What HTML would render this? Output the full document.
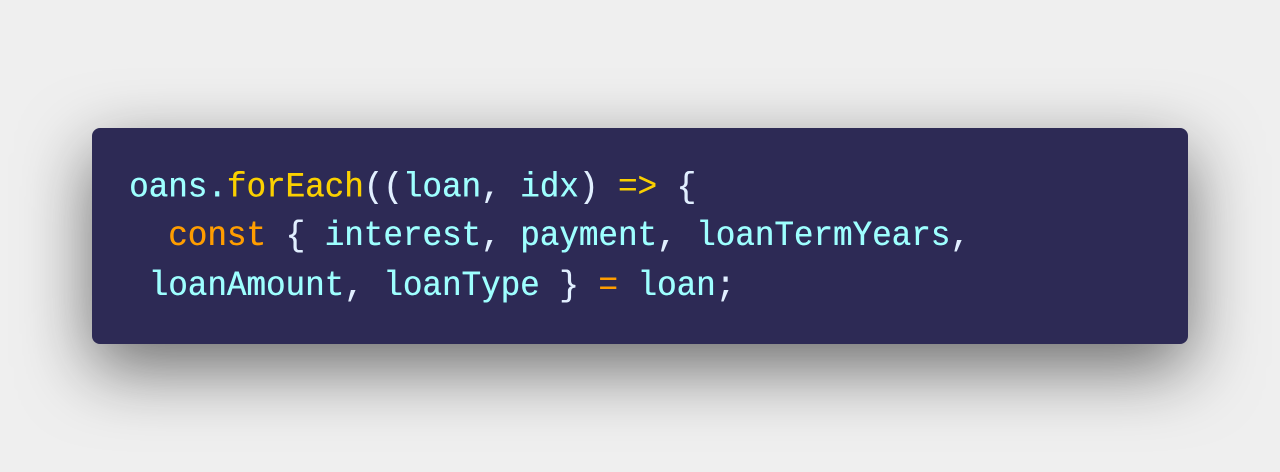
<!DOCTYPE html>
<html><head><style>
html,body{margin:0;padding:0;width:1280px;height:472px;background:#efefef;overflow:hidden}
.card{position:absolute;left:92px;top:128px;width:1096px;height:216px;background:#2d2a55;border-radius:8px;box-shadow:0 24px 70px rgba(0,0,0,0.55)}
pre{position:absolute;left:37px;top:35px;margin:0;font-family:"Liberation Mono",monospace;font-size:32.6px;line-height:45.4px;color:#9effff;white-space:pre;transform:scaleY(1.08);transform-origin:0 0;text-shadow:0.4px 0 0 currentColor}
.y{color:#fad000}.o{color:#ff9d00}.w{color:#e1efff}
</style></head><body>
<div class="card"><pre>oans.<span class="y">forEach</span><span class="w">((</span>loan<span class="w">,</span> idx<span class="w">)</span> <span class="y">=&gt;</span> <span class="w">{</span>
  <span class="o">const</span> <span class="w">{</span> interest<span class="w">,</span> payment<span class="w">,</span> loanTermYears<span class="w">,</span>
 loanAmount<span class="w">,</span> loanType <span class="w">}</span> <span class="o">=</span> loan<span class="w">;</span></pre></div>
</body></html>
